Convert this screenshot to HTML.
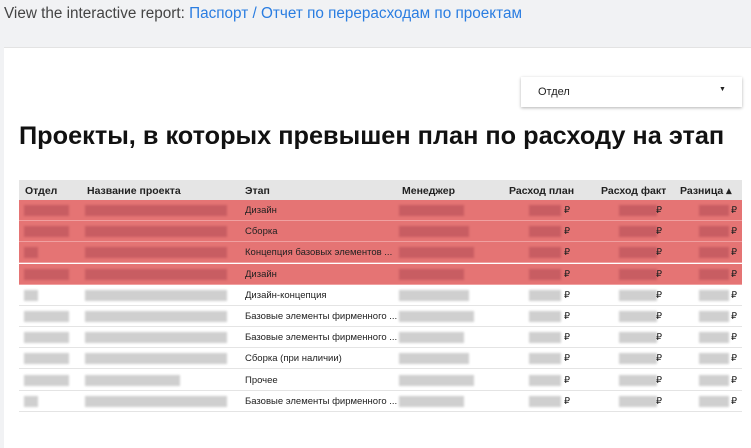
<!DOCTYPE html>
<html><head><meta charset="utf-8"><style>
body{margin:0;width:751px;height:425px;overflow:hidden;background:#f1f2f4;font-family:"Liberation Sans",sans-serif;position:relative}
.a{position:absolute}
.top{left:4px;top:5px;font-size:15.3px;color:#444}
.top span{color:#2a7de1}
.card{left:4px;top:47px;width:760px;height:400px;background:#fff;border-top:1px solid #e3e3e3}
.dd{left:521px;top:77px;width:221px;height:30px;background:#fff;box-shadow:0 1px 3px rgba(0,0,0,.3);font-size:11px;color:#222}
h1{position:absolute;left:19px;top:122px;margin:0;font-size:25.3px;font-weight:bold;color:#111;letter-spacing:0}
.hd{left:19px;top:180px;width:723px;height:20px;background:#e5e5e5;font-size:10.5px;font-weight:bold;color:#222}
.row{left:19px;width:723px;height:20px;border-bottom:1px solid #e4e4e4;font-size:9.5px;color:#222}
.red{background:#e57474;border-bottom:1px solid #f0a0a0}
.t{position:absolute;top:5px;white-space:nowrap}
.b{position:absolute;top:5px;height:11px;filter:blur(1px)}
.red .b{background:#c85d62}
.w .b{background:#cfcfcf}
.r{position:absolute;top:5px;font-size:9.5px}
</style></head><body>
<div class="a top">View the interactive report: <span>Паспорт / Отчет по перерасходам по проектам</span></div>
<div class="a card"></div>
<div class="a dd"><div class="a" style="left:17px;top:9px">Отдел</div><div class="a" style="left:198px;top:9px;font-size:7px">▼</div></div>
<h1>Проекты, в которых превышен план по расходу на этап</h1>
<div class="a hd">
<div class="t" style="left:6px">Отдел</div><div class="t" style="left:68px">Название проекта</div><div class="t" style="left:226px">Этап</div><div class="t" style="left:383px">Менеджер</div><div class="t" style="left:490px">Расход план</div><div class="t" style="left:582px">Расход факт</div><div class="t" style="left:661px">Разница ▴</div>
</div>
<div id="rows"></div>
<script>
var st=["Дизайн","Сборка","Концепция базовых элементов ...","Дизайн","Дизайн-концепция","Базовые элементы фирменного ...","Базовые элементы фирменного ...","Сборка (при наличии)","Прочее","Базовые элементы фирменного ..."];
var h="";
for(var i=0;i<10;i++){
var cls=i<4?"red":"w";
h+='<div class="a row '+cls+'" style="top:'+(200+i*21.2)+'px">'+
'<div class="b" style="left:5px;width:'+(i==2||i==4||i==9?14:45)+'px"></div>'+
'<div class="b" style="left:66px;width:'+(i==8?95:142)+'px"></div>'+
'<div class="t" style="left:226px">'+st[i]+'</div>'+
'<div class="b" style="left:380px;width:'+(65+(i%3)*5)+'px"></div>'+
'<div class="b" style="left:510px;width:32px"></div><div class="r" style="left:545px">₽</div>'+
'<div class="b" style="left:600px;width:38px"></div><div class="r" style="left:637px">₽</div>'+
'<div class="b" style="left:680px;width:30px"></div><div class="r" style="left:712px">₽</div>'+
'</div>';}
document.getElementById("rows").innerHTML=h;
</script>
</body></html>
